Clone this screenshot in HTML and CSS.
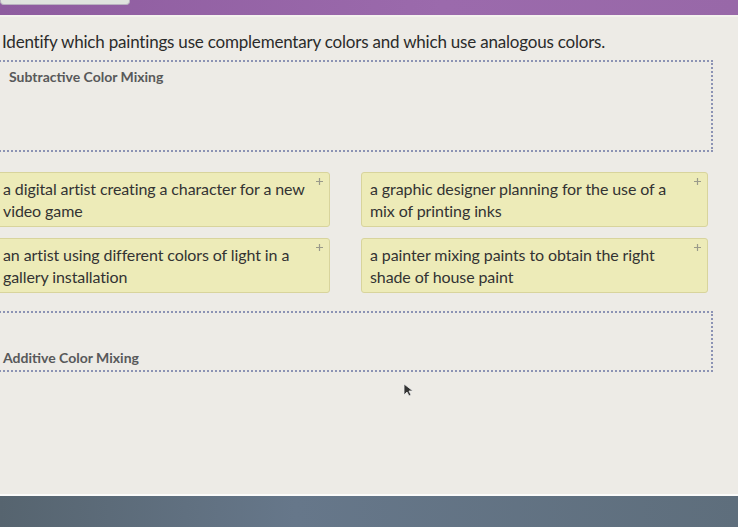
FILE: index.html
```html
<!DOCTYPE html>
<html>
    <head>
        <title>Color Mixing</title>
        <link rel="stylesheet" href="styles.css">
    </head>
    <body>
        <div class="topbar">
            <div class="tab"></div>
        </div>
        <div class="main">
            <h1 class="prompt">Identify which paintings use complementary colors and which use analogous colors.</h1>

            <div class="zone zone-top">
                <div class="zone-label">Subtractive Color Mixing</div>
            </div>

            <div class="cards">
                <div class="card">
                    a digital artist creating a character for a new video game
                    <svg class="grip" width="7" height="7" viewBox="0 0 7 7"><path d="M3.5 0v7M0 3.5h7" stroke="#9a9a8a" stroke-width="1.2"/></svg>
                </div>
                <div class="card">
                    a graphic designer planning for the use of a mix of printing inks
                    <svg class="grip" width="7" height="7" viewBox="0 0 7 7"><path d="M3.5 0v7M0 3.5h7" stroke="#9a9a8a" stroke-width="1.2"/></svg>
                </div>
                <div class="card">
                    an artist using different colors of light in a gallery installation
                    <svg class="grip" width="7" height="7" viewBox="0 0 7 7"><path d="M3.5 0v7M0 3.5h7" stroke="#9a9a8a" stroke-width="1.2"/></svg>
                </div>
                <div class="card">
                    a painter mixing paints to obtain the right shade of house paint
                    <svg class="grip" width="7" height="7" viewBox="0 0 7 7"><path d="M3.5 0v7M0 3.5h7" stroke="#9a9a8a" stroke-width="1.2"/></svg>
                </div>
            </div>

            <div class="zone zone-bottom">
                <div class="zone-label">Additive Color Mixing</div>
            </div>

            <svg class="pointer" width="10" height="14" viewBox="0 0 10 14"><path d="M1 1v11l3-3 2 4 2-1-2-4h4z" fill="#333" stroke="#eee" stroke-width="0.8"/></svg>
        </div>
        <div class="footer"></div>
    </body>
</html>
```

FILE: styles.css
```css
html, body {
    height: 100%;
}
body {
    margin: 0;
    display: flex;
    flex-direction: column;
    overflow: hidden;
    background-color: #edebe6;
    font-family: Lato, "Liberation Sans", sans-serif;
    color: #333;
}

.topbar {
    height: 15px;
    flex-shrink: 0;
    background: linear-gradient(to right, #8e5c9f, #9b6aac 60%, #9868a8);
    border-bottom: 2px solid #f4f2ee;
}
.tab {
    width: 128px;
    height: 4px;
    background-color: #dfe3de;
    border-radius: 0 0 4px 4px;
    border: 1px solid #b9b3c0;
    border-top: 0;
}

.main {
    flex: 1;
    position: relative;
    margin-left: -9px;
    width: 722px;
}

.prompt {
    margin: 14px 0 0 11px;
    font-size: 17px;
    line-height: 22px;
    letter-spacing: -0.2px;
    font-weight: normal;
    color: #2b2b2b;
    white-space: nowrap;
}

.zone {
    border: 2px dotted #8c93b4;
    margin-top: 7px;
}
.zone-top {
    height: 88px;
}
.zone-bottom {
    height: 57px;
    margin-top: 18px;
    display: flex;
    align-items: flex-end;
}
.zone-label {
    font-size: 14px;
    font-weight: bold;
    color: #58595a;
    padding: 6px 16px;
}
.zone-bottom .zone-label {
    padding: 0 10px 4px;
}

.cards {
    margin-top: 20px;
    width: 717px;
    display: grid;
    grid-template-columns: 339px 1fr;
    gap: 11px 31px;
}
.card {
    position: relative;
    background-color: #edebb8;
    border: 1px solid #d8d49c;
    border-radius: 3px;
    padding: 5px 12px 4px 11px;
    font-size: 16px;
    line-height: 22px;
    letter-spacing: -0.1px;
    color: #333;
}
.card:nth-child(2n) {
    padding-left: 8px;
    padding-right: 24px;
}
.grip {
    position: absolute;
    top: 5px;
    right: 6px;
}

.pointer {
    position: absolute;
    left: 412px;
    top: 366px;
}

.footer {
    height: 31px;
    flex-shrink: 0;
    background: linear-gradient(to right, #56646f, #66778a 40%, #5e6e7c);
    border-top: 2px solid #fbfbfa;
}
```
